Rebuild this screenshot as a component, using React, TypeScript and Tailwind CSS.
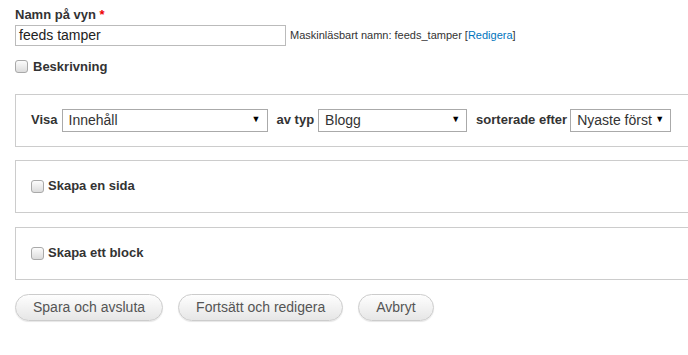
import React from "react";

function Box() {
  return (
    <span className="inline-block w-[13px] h-[13px] rounded-[3px] border border-[#a9a9a9] bg-gradient-to-b from-[#fcfcfc] to-[#dcdcdc] shrink-0" />
  );
}

function FakeSelect({ value, width }: { value: string; width: string }) {
  return (
    <div className={`${width} h-[23px] border border-[#aaa] bg-white flex items-center justify-between pl-[6px] pr-[6px] text-[14px] font-normal text-[#333] whitespace-nowrap`}>
      <span>{value}</span>
      <span className="text-[9px] text-black">▼</span>
    </div>
  );
}

export default function App() {
  return (
    <div className="w-[688px] h-[355px] overflow-hidden bg-white font-['Liberation_Sans',Arial,sans-serif] text-[#333] pl-[15px]">
      <div className="pt-[7px]">
        <label className="block text-[13px] font-bold leading-[16px]">
          Namn på vyn <span className="text-[#e00]">*</span>
        </label>
        <div className="flex items-center mt-[2px]">
          <div className="w-[271px] h-[21px] border border-[#bbb] flex items-center px-[3px] text-[14px] text-[#222]">
            feeds tamper
          </div>
          <span className="ml-[4px] text-[11px] text-[#333]">
            Maskinläsbart namn: feeds_tamper [<span className="text-[#0074bd]">Redigera</span>]
          </span>
        </div>
      </div>

      <div className="flex items-center gap-[5px] mt-[11px] text-[13px] font-bold">
        <Box />
        <span>Beskrivning</span>
      </div>

      <fieldset className="mt-[17px] w-[700px] h-[53px] border border-[#ccc] flex items-center pl-[15px] text-[13px] font-bold">
        <span className="mr-[4px]">Visa</span>
        <FakeSelect value="Innehåll" width="w-[206px]" />
        <span className="ml-[9px] mr-[4px]">av typ</span>
        <FakeSelect value="Blogg" width="w-[149px]" />
        <span className="ml-[9px] mr-[3px]">sorterade efter</span>
        <FakeSelect value="Nyaste först" width="w-[101px]" />
      </fieldset>

      <fieldset className="mt-[13px] w-[700px] h-[53px] border border-[#ccc] flex items-center pl-[15px] gap-[4px] text-[13px] font-bold">
        <Box />
        <span>Skapa en sida</span>
      </fieldset>

      <fieldset className="mt-[14px] w-[700px] h-[53px] border border-[#ccc] flex items-center pl-[15px] gap-[4px] text-[13px] font-bold">
        <Box />
        <span>Skapa ett block</span>
      </fieldset>

      <div className="flex gap-[15px] mt-[14px]">
        {["Spara och avsluta", "Fortsätt och redigera", "Avbryt"].map((t) => (
          <button
            key={t}
            className="h-[27px] px-[17px] rounded-full border border-[#ccc] bg-gradient-to-b from-[#fefefe] to-[#e6e6e6] text-[14px] text-[#555] shadow-[0_1px_1px_rgba(0,0,0,0.1)]"
          >
            {t}
          </button>
        ))}
      </div>
    </div>
  );
}
